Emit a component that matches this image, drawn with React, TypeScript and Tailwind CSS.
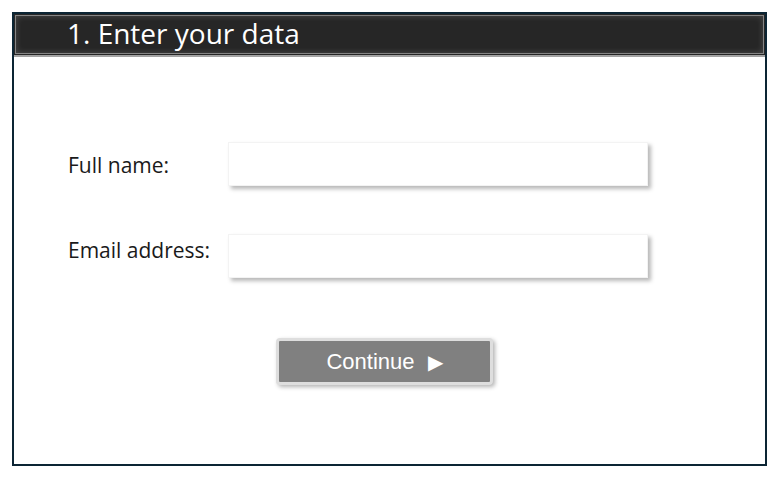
export default function App() {
  const fields = [
    { label: 'Full name:', type: 'text', offset: 'mt-[3px]' },
    { label: 'Email address:', type: 'email', offset: '-mt-[10px]' },
  ]

  return (
    <div className="h-[480px] w-[780px] bg-white p-3 font-['Open_Sans',sans-serif]">
      <div className="flex h-[454px] w-[755px] flex-col border-2 border-[#0c2534] bg-white">
        <header className="h-[43px] border-b-2 border-[#a3a3a3] bg-[#262626] p-px">
          <div className="flex h-full items-center border border-[#858585] pb-[3px] pl-[51px] shadow-[inset_0_0_6px_rgba(255,255,255,0.18)]">
            <h1 className="text-[28px] leading-none text-white">1. Enter your data</h1>
          </div>
        </header>

        <form className="flex flex-col gap-12 pl-[54px] pt-[85px]">
          {fields.map((f) => (
            <div key={f.label} className="flex items-center">
              <label className={`w-[160px] text-[21px] text-[#1a1a1a] ${f.offset}`}>{f.label}</label>
              <input
                type={f.type}
                className="h-[44px] w-[420px] border border-[#f3f3f3] bg-white shadow-[3px_3px_4px_rgba(0,0,0,0.28)] outline-none"
              />
            </div>
          ))}

          <div className="mt-3 pl-[208px]">
            <button
              type="button"
              className="rounded-[4px] border-[3px] border-[#dedede] bg-[#808080] shadow-[2px_2px_4px_rgba(0,0,0,0.3)]"
            >
              <span className="flex h-[41px] w-[211px] items-center justify-center gap-[13px] font-['Liberation_Sans',sans-serif] text-[22px] text-white">
                Continue <span className="text-[20px]">▶</span>
              </span>
            </button>
          </div>
        </form>
      </div>
    </div>
  )
}
